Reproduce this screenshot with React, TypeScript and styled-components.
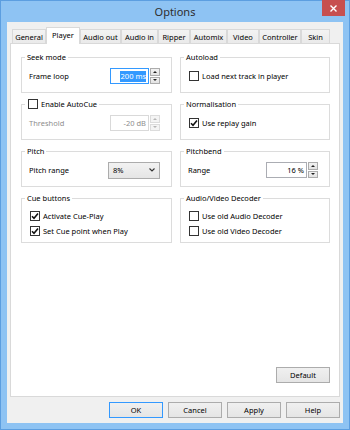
import styled, { createGlobalStyle } from 'styled-components';

const GlobalStyle = createGlobalStyle`
  * { box-sizing: border-box; }
  html, body { margin: 0; padding: 0; }
  body {
    font-family: "Noto Sans", "Open Sans", sans-serif;
    font-size: 7.5px;
    color: #000;
  }
`;

const Window = styled.div`
  width: 350px;
  height: 430px;
  display: flex;
  flex-direction: column;
  padding: 0 6px 6px;
  background: #8ec3f3;
  border: 1px solid #5c9ee0;
`;

const TitleBar = styled.div`
  height: 21px;
  display: grid;
  grid-template-columns: 1fr auto 1fr;
  align-items: center;
`;

const Title = styled.div`
  grid-column: 2;
  font-size: 11px;
  color: #2e2e2e;
`;

const CloseBtn = styled.div`
  grid-column: 3;
  justify-self: end;
  align-self: start;
  width: 23px;
  height: 16px;
  margin: -1px -2px 0 0;
  background: #c74f4f;
  display: flex;
  align-items: center;
  justify-content: center;
`;

const Client = styled.div`
  flex: 1;
  background: #f0f0f0;
  display: flex;
  flex-direction: column;
  padding: 5px 3px 5px;
`;

const TabRow = styled.div`
  height: 16px;
  display: flex;
  align-items: flex-end;
  padding-left: 2px;
`;

const Tab = styled.div<{ $w: number; $active?: boolean }>`
  width: ${(p) => p.$w}px;
  height: ${(p) => (p.$active ? 17 : 14)}px;
  margin-bottom: ${(p) => (p.$active ? -1 : 0)}px;
  position: relative;
  z-index: ${(p) => (p.$active ? 1 : 0)};
  border: 1px solid #d9d9d9;
  border-bottom: none;
  background: ${(p) => (p.$active ? '#fff' : 'linear-gradient(#f3f3f3, #eaeaea)')};
  display: flex;
  align-items: ${(p) => (p.$active ? 'flex-start' : 'center')};
  padding-top: ${(p) => (p.$active ? 2 : 0)}px;
  justify-content: center;
  white-space: nowrap;
`;

const Panel = styled.div`
  flex: 1;
  background: #fff;
  border: 1px solid #d9d9d9;
  display: flex;
  flex-direction: column;
  padding: 8px 8px 13px 10px;
`;

const Groups = styled.div`
  display: grid;
  grid-template-columns: 151px 150px;
  column-gap: 8px;
  row-gap: 6px;
`;

const Group = styled.fieldset`
  margin: 0;
  padding: 0;
  min-width: 0;
  border: 1px solid #dcdcdc;
`;

const Legend = styled.legend`
  margin-left: 3px;
  padding: 0 2px;
  line-height: 10px;
  display: flex;
  align-items: center;
  gap: 3px;
`;

const GroupBody = styled.div<{ $list?: boolean }>`
  display: flex;
  flex-direction: column;
  padding: ${(p) => (p.$list ? '5px 8px 4px 7px' : '6px 11px 8px 7px')};
`;

const Row = styled.div`
  height: 16px;
  display: flex;
  align-items: center;
  justify-content: space-between;
`;

const Label = styled.span<{ $disabled?: boolean }>`
  color: ${(p) => (p.$disabled ? '#8d8d8d' : '#000')};
`;

const CheckRow = styled.label<{ $h?: number }>`
  height: ${(p) => p.$h ?? 16}px;
  display: flex;
  align-items: center;
  gap: 3px;
  padding-left: 1px;
`;

const Box = styled.span`
  width: 10px;
  height: 10px;
  border: 1px solid #333;
  background: #fff;
  display: flex;
  align-items: center;
  justify-content: center;
`;

const Spin = styled.div<{ $w: number }>`
  width: ${(p) => p.$w}px;
  height: 16px;
  display: flex;
  gap: 1px;
`;

const SpinField = styled.div<{ $focus?: boolean; $disabled?: boolean }>`
  flex: 1;
  border: 1px solid
    ${(p) => (p.$focus ? '#3399ff' : p.$disabled ? '#d9d9d9' : '#abadb3')};
  background: #fff;
  color: ${(p) => (p.$disabled ? '#8d8d8d' : '#000')};
  display: flex;
  align-items: center;
  justify-content: flex-end;
  padding-right: 2px;
`;

const Selection = styled.span`
  background: #3399ff;
  color: #fff;
  line-height: 11px;
  padding-left: 1px;
`;

const SpinButtons = styled.div`
  width: 10px;
  display: flex;
  flex-direction: column;
  gap: 1px;
`;

const SpinButton = styled.div<{ $disabled?: boolean }>`
  flex: 1;
  border: 1px solid ${(p) => (p.$disabled ? '#dcdcdc' : '#acacac')};
  background: ${(p) => (p.$disabled ? '#f4f4f4' : 'linear-gradient(#f2f2f2, #e3e3e3)')};
  display: flex;
  align-items: center;
  justify-content: center;
`;

const Arrow = styled.span<{ $up?: boolean; $disabled?: boolean }>`
  width: 0;
  height: 0;
  border-left: 2px solid transparent;
  border-right: 2px solid transparent;
  ${(p) => (p.$up ? 'border-bottom' : 'border-top')}: 2px solid
    ${(p) => (p.$disabled ? '#b5b5b5' : '#222')};
`;

const Combo = styled.div`
  width: 52px;
  height: 17px;
  border: 1px solid #acacac;
  background: linear-gradient(#f2f2f2, #e5e5e5);
  display: flex;
  align-items: center;
  justify-content: space-between;
  padding: 0 4px;
`;

const Spacer = styled.div`
  flex: 1;
`;

const Button = styled.div<{ $default?: boolean }>`
  width: 54px;
  height: 16px;
  border: 1px solid ${(p) => (p.$default ? '#3399ff' : '#acacac')};
  background: linear-gradient(#f0f0f0, #e5e5e5);
  display: flex;
  align-items: center;
  justify-content: center;
`;

const DefaultButton = styled(Button)`
  align-self: flex-end;
  margin-right: 1px;
`;

const ButtonRow = styled.div`
  display: flex;
  justify-content: flex-end;
  gap: 5px;
  margin-top: 5px;
`;

const tabs = [
  { name: 'General', w: 34 },
  { name: 'Player', w: 34, active: true },
  { name: 'Audio out', w: 41 },
  { name: 'Audio in', w: 37 },
  { name: 'Ripper', w: 32 },
  { name: 'Automix', w: 37 },
  { name: 'Video', w: 32 },
  { name: 'Controller', w: 42 },
  { name: 'Skin', w: 29 },
];

function Check({ checked, h, children }: { checked?: boolean; h?: number; children: React.ReactNode }) {
  return (
    <CheckRow $h={h}>
      <Box>
        {checked && (
          <svg width="8" height="8" viewBox="0 0 8 8">
            <path d="M1 4.2 L3 6.2 L7 1.5" fill="none" stroke="#111" strokeWidth="1.6" />
          </svg>
        )}
      </Box>
      {children}
    </CheckRow>
  );
}

function SpinEdit({ w, focus, disabled, children }: { w: number; focus?: boolean; disabled?: boolean; children: React.ReactNode }) {
  return (
    <Spin $w={w}>
      <SpinField $focus={focus} $disabled={disabled}>
        {children}
      </SpinField>
      <SpinButtons>
        <SpinButton $disabled={disabled}>
          <Arrow $up $disabled={disabled} />
        </SpinButton>
        <SpinButton $disabled={disabled}>
          <Arrow $disabled={disabled} />
        </SpinButton>
      </SpinButtons>
    </Spin>
  );
}

export default function App() {
  return (
    <>
      <GlobalStyle />
      <Window>
        <TitleBar>
          <Title>Options</Title>
          <CloseBtn>
            <svg width="7" height="7" viewBox="0 0 7 7">
              <path d="M0.5 0.5 L6.5 6.5 M6.5 0.5 L0.5 6.5" stroke="#fff" strokeWidth="1.4" />
            </svg>
          </CloseBtn>
        </TitleBar>
        <Client>
          <TabRow>
            {tabs.map((t) => (
              <Tab key={t.name} $w={t.w} $active={t.active}>
                {t.name}
              </Tab>
            ))}
          </TabRow>
          <Panel>
            <Groups>
              <Group>
                <Legend>Seek mode</Legend>
                <GroupBody>
                  <Row>
                    <Label>Frame loop</Label>
                    <SpinEdit w={50} focus>
                      <Selection>200 ms</Selection>
                    </SpinEdit>
                  </Row>
                </GroupBody>
              </Group>
              <Group>
                <Legend>Autoload</Legend>
                <GroupBody>
                  <Check>Load next track in player</Check>
                </GroupBody>
              </Group>

              <Group>
                <Legend>
                  <Check h={10}>Enable AutoCue</Check>
                </Legend>
                <GroupBody>
                  <Row>
                    <Label $disabled>Threshold</Label>
                    <SpinEdit w={50} disabled>
                      -20 dB
                    </SpinEdit>
                  </Row>
                </GroupBody>
              </Group>
              <Group>
                <Legend>Normalisation</Legend>
                <GroupBody>
                  <Check checked>Use replay gain</Check>
                </GroupBody>
              </Group>

              <Group>
                <Legend>Pitch</Legend>
                <GroupBody>
                  <Row>
                    <Label>Pitch range</Label>
                    <Combo>
                      <span>8%</span>
                      <svg width="6" height="4" viewBox="0 0 6 4">
                        <path d="M0.5 0.5 L3 3 L5.5 0.5" fill="none" stroke="#333" strokeWidth="1.1" />
                      </svg>
                    </Combo>
                  </Row>
                </GroupBody>
              </Group>
              <Group>
                <Legend>Pitchbend</Legend>
                <GroupBody>
                  <Row>
                    <Label>Range</Label>
                    <SpinEdit w={52}>16 %</SpinEdit>
                  </Row>
                </GroupBody>
              </Group>

              <Group>
                <Legend>Cue buttons</Legend>
                <GroupBody $list>
                  <Check checked h={15}>Activate Cue-Play</Check>
                  <Check checked h={15}>Set Cue point when Play</Check>
                </GroupBody>
              </Group>
              <Group>
                <Legend>Audio/Video Decoder</Legend>
                <GroupBody $list>
                  <Check h={15}>Use old Audio Decoder</Check>
                  <Check h={15}>Use old Video Decoder</Check>
                </GroupBody>
              </Group>
            </Groups>
            <Spacer />
            <DefaultButton>Default</DefaultButton>
          </Panel>
          <ButtonRow>
            <Button $default>OK</Button>
            <Button>Cancel</Button>
            <Button>Apply</Button>
            <Button>Help</Button>
          </ButtonRow>
        </Client>
      </Window>
    </>
  );
}
